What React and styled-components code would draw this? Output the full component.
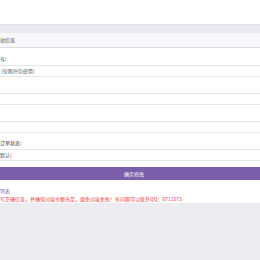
import React from 'react';
import styled, { createGlobalStyle } from 'styled-components';

const Global = createGlobalStyle`
  html, body { margin: 0; padding: 0; background: #edecf1; overflow: hidden; }
  body { font-family: "Noto Sans CJK SC", "Noto Sans", sans-serif; }
`;

const Card = styled.div`
  background: #fff;
  padding-top: 24px;
`;

const PanelHead = styled.div`
  border-top: 1px solid #e2e0e7;
  border-bottom: 1px solid #dcdae2;
`;

const Band = styled.div`
  height: 8px;
  background: #ebe9f0;
`;

const Title = styled.div`
  height: 14px;
  background: #f8f8fa;
  font-size: 5px;
  line-height: 14px;
  color: #444;
  padding-left: 0;
`;

const Body = styled.div`
  padding: 8px 0 0 0;
  display: flex;
  flex-direction: column;
`;

const Label = styled.div`
  font-size: 5px;
  line-height: 6px;
  color: #333;
  margin-bottom: 3px;
`;

const Field = styled.div`
  height: 10px;
  border-top: 1px solid #e6e6e6;
  border-bottom: 1px solid #e6e6e6;
  font-size: 5px;
  line-height: 10px;
  color: #555;
  padding-left: ${p => p.$indent || 0}px;
  margin-bottom: ${p => p.$gap || 0}px;
`;

const Button = styled.div`
  height: 13px;
  margin-top: 6px;
  padding-left: 8px;
  background: #7b5fab;
  color: #fff;
  font-size: 5px;
  line-height: 13px;
  text-align: center;
`;

const Foot = styled.div`
  padding-top: 7px;
  font-size: 5px;
  line-height: 8px;
`;

const Link = styled.div`
  color: #7266a8;
`;

const Warn = styled.div`
  color: #e8413c;
`;

export default function App() {
  return (
    <>
      <Global />
      <Card>
        <PanelHead>
          <Band />
          <Title>站信息</Title>
        </PanelHead>
        <Body>
          <Label>号:</Label>
          <Field $indent={1} $gap={16}>(仅限外包使用)</Field>
          <Field $gap={16} />
          <Field $gap={7} />
          <Label>订单状态:</Label>
          <Field>默认)</Field>
          <Button>确定修改</Button>
          <Foot>
            <Link>列表</Link>
            <Warn>写正确信息，并确保对接余额充足，避免对接失败！有问题可以联系QQ：6711573</Warn>
          </Foot>
        </Body>
      </Card>
    </>
  );
}
